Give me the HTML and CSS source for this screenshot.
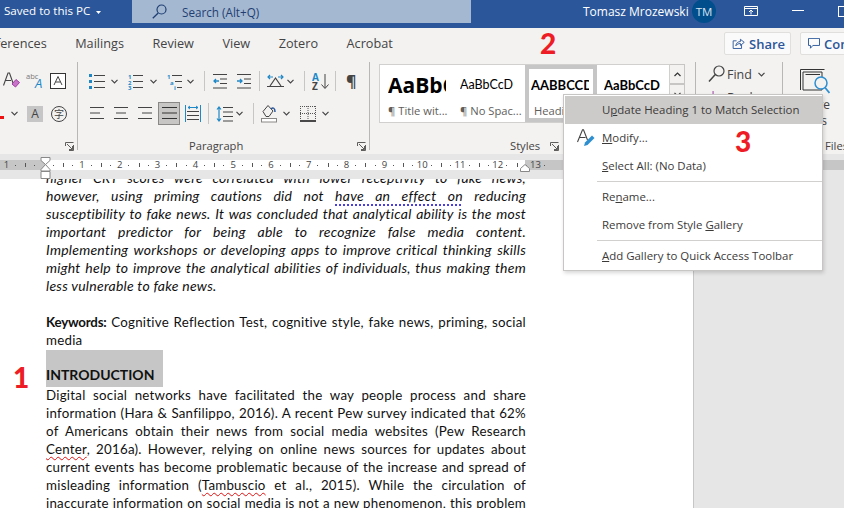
FILE: index.html
```html
<!DOCTYPE html>
<html lang="en">
<head>
    <meta charset="UTF-8">
    <meta name="viewport" content="width=device-width, initial-scale=1.0">
    <title>Update Heading 1 to Match Selection</title>
    <link rel="stylesheet" href="styles.css">
</head>
<body>
    <svg class="defs" width="0" height="0">
        <symbol id="chev" viewBox="0 0 7 5"><path d="M.5 .8 3.5 3.8 6.5 .8" fill="none" stroke="#444" stroke-width="1.2"/></symbol>
        <symbol id="launcher" viewBox="0 0 9 9"><path d="M.5 4V.5H8.5M8.5 3V8.5H4M2 2 7.5 7.5M7.5 4V7.5H4" fill="none" stroke="#605e5c"/></symbol>
    </svg>

    <header class="titlebar">
        <span class="saved">Saved to this PC</span>
        <svg class="saved-caret" width="5" height="3"><path d="M0 0H5L2.5 3Z" fill="#fff"/></svg>
        <div class="search">
            <svg width="15" height="15" viewBox="0 0 15 15"><circle cx="9.5" cy="5.5" r="4.5" fill="none" stroke="#1f3f73" stroke-width="1.2"/><path d="M6.2 9 .8 14.2" stroke="#1f3f73" stroke-width="1.3"/></svg>
            <span>Search (Alt+Q)</span>
        </div>
        <span class="username">Tomasz Mrozewski</span>
        <span class="avatar">TM</span>
        <svg class="win-display" width="14" height="10" viewBox="0 0 14 10"><path d="M.5 .5H13.5V9.5H.5ZM.5 2.5H13.5M7 8.5V4M5 6 7 4 9 6" fill="none" stroke="#fff"/></svg>
        <span class="win-min"></span>
        <span class="win-max"></span>
    </header>

    <nav class="tabs">
        <span class="tab tab-cut">References</span>
        <span class="tab">Mailings</span>
        <span class="tab">Review</span>
        <span class="tab">View</span>
        <span class="tab">Zotero</span>
        <span class="tab">Acrobat</span>
        <button class="share-btn">
            <svg width="13" height="13" viewBox="0 0 17 16"><path d="M6 4.5H1.5V14.5H12.5V10M5 11C5.5 7 8 5.5 11 5.5V2.5L16 6.5 11 10.5V8C8.5 8 6.5 9 5 11Z" fill="none" stroke="#2b579a" stroke-width="1.2"/></svg>
            Share
        </button>
        <button class="comments-btn">
            <svg width="12" height="11" viewBox="0 0 15 14"><path d="M.5 .5H14.5V9.5H6L3 13V9.5H.5Z" fill="none" stroke="#2b579a" stroke-width="1.2"/></svg>
            Comments
        </button>
    </nav>

    <section class="ribbon">
        <div class="group group-font">
            <div class="font-top">
                <svg width="17" height="17" viewBox="0 0 17 17"><path d="M.5 13.5 5 1H6.5L10 11M2.5 8.5H8" fill="none" stroke="#444" stroke-width="1.1"/><path d="M9 12 13 7.5 16.5 10.5 12.5 15Z" fill="#c774c9" stroke="#a13ea3"/></svg>
                <svg width="18" height="17" viewBox="0 0 18 17"><text x="0" y="7" class="ico-abc">abc</text><text x="9" y="16" class="ico-a-blue">A</text></svg>
                <svg width="16" height="16" viewBox="0 0 16 16"><rect x=".5" y=".5" width="15" height="15" fill="#fff" stroke="#333"/><path d="M4 12 8 3.5 12 12M5.5 9H10.5" fill="none" stroke="#444"/></svg>
            </div>
            <div class="font-bottom">
                <span class="red-chip"></span>
                <svg class="chev" width="7" height="5"><use href="#chev"/></svg>
                <span class="shaded-a">A</span>
                <span class="circled">字</span>
            </div>
            <div class="group-foot foot-font">
                <svg class="launcher" width="9" height="9"><use href="#launcher"/></svg>
            </div>
        </div>
        <div class="group-sep"></div>

        <div class="group group-para">
            <div class="para-top">
                <svg width="16" height="17" viewBox="0 0 16 17"><path d="M0 1H3V4H0ZM0 7H3V10H0ZM0 13H3V16H0Z" fill="#1e88c7"/><path d="M5 2.5H16M5 8.5H16M5 14.5H16" stroke="#444"/></svg>
                <svg class="chev" width="7" height="5"><use href="#chev"/></svg>
                <svg width="16" height="17" viewBox="0 0 16 17"><text x="1" y="6" class="ico-num">1</text><text x="1" y="11.5" class="ico-num">2</text><text x="1" y="17" class="ico-num">3</text><path d="M6 2.5H16M6 8.5H16M6 14.5H16" stroke="#444"/></svg>
                <svg class="chev" width="7" height="5"><use href="#chev"/></svg>
                <svg width="16" height="17" viewBox="0 0 16 17"><text x="0" y="6" class="ico-num">1</text><text x="3" y="11.5" class="ico-num">a</text><text x="7" y="17" class="ico-num">i</text><path d="M5 2.5H15M8 8.5H15M10 14.5H15" stroke="#444"/></svg>
                <svg class="chev" width="7" height="5"><use href="#chev"/></svg>
                <span class="tool-sep"></span>
                <svg width="15" height="15" viewBox="0 0 15 15"><path d="M0 .5H14M7 5H14M7 9.5H14M0 14H14" stroke="#444"/><path d="M6 7H1M3 5 1 7 3 9" fill="none" stroke="#1e88c7" stroke-width="1.3"/></svg>
                <svg width="15" height="15" viewBox="0 0 15 15"><path d="M0 .5H14M7 5H14M7 9.5H14M0 14H14" stroke="#444"/><path d="M0 7H5M3 5 5 7 3 9" fill="none" stroke="#1e88c7" stroke-width="1.3"/></svg>
                <span class="tool-sep"></span>
                <svg width="17" height="15" viewBox="0 0 17 15"><path d="M1 3H6M3 1 1 3 3 5M11 3H16M14 1 16 3 14 5" fill="none" stroke="#1e88c7" stroke-width="1.2"/><path d="M3 12 8.5 4 14 12M0 12.5H17" fill="none" stroke="#444" stroke-width="1.2"/></svg>
                <svg class="chev" width="7" height="5"><use href="#chev"/></svg>
                <span class="tool-sep"></span>
                <svg width="17" height="17" viewBox="0 0 17 17"><text x="0" y="8" class="ico-sort-a">A</text><text x="0" y="17" class="ico-sort-z">Z</text><path d="M13 1V15M9.5 11.5 13 15.5 16.5 11.5" fill="none" stroke="#444"/></svg>
                <span class="tool-sep"></span>
                <span class="pilcrow">¶</span>
            </div>
            <div class="para-bottom">
                <svg width="15" height="13" viewBox="0 0 15 13"><path d="M0 .5H14M0 6H10M0 11.5H14" stroke="#444"/></svg>
                <svg width="15" height="13" viewBox="0 0 15 13"><path d="M0 .5H14M2 6H12M0 11.5H14" stroke="#444"/></svg>
                <svg width="15" height="13" viewBox="0 0 15 13"><path d="M0 .5H14M4 6H14M0 11.5H14" stroke="#444"/></svg>
                <span class="align-active"><svg width="15" height="13" viewBox="0 0 15 13"><path d="M0 .5H15M0 6H15M0 11.5H15" stroke="#333"/></svg></span>
                <svg width="16" height="17" viewBox="0 0 16 17"><path d="M.5 0V17M15.5 0V17M3 2.5H13M5 1 3 2.5 5 4M11 1 13 2.5 11 4" fill="none" stroke="#1e88c7"/><path d="M2 6.5H14M2 10.5H14M2 14.5H14" stroke="#444"/></svg>
                <span class="tool-sep"></span>
                <svg width="17" height="16" viewBox="0 0 17 16"><path d="M3 1V15M1 3.5 3 1 5 3.5M1 12.5 3 15 5 12.5" fill="none" stroke="#1e88c7" stroke-width="1.2"/><path d="M7 1.5H17M7 6H17M7 10.5H17M7 15H17" stroke="#444"/></svg>
                <svg class="chev" width="7" height="5"><use href="#chev"/></svg>
                <span class="tool-sep"></span>
                <svg width="16" height="19" viewBox="0 0 16 19"><path d="M2 7.5 7 1.5 12 7 8 12.5H5Z" fill="none" stroke="#444"/><path d="M10 5C12 3 14 4 14 8" fill="none" stroke="#2b579a" stroke-width="1.5"/><rect x=".5" y="14.5" width="15" height="3.5" fill="#fff" stroke="#8a8886"/></svg>
                <svg class="chev" width="7" height="5"><use href="#chev"/></svg>
                <svg width="16" height="16" viewBox="0 0 16 16"><path d="M.5 0V14M15.5 0V14M0 .5H16M8 0V14M0 7.5H16" fill="none" stroke="#555" stroke-dasharray="1 1"/><path d="M0 15H16" stroke="#111" stroke-width="1.5"/></svg>
                <svg class="chev" width="7" height="5"><use href="#chev"/></svg>
            </div>
            <div class="group-foot">
                <span class="foot-label label-para">Paragraph</span>
                <svg class="launcher launcher-para" width="9" height="9"><use href="#launcher"/></svg>
            </div>
        </div>
        <div class="group-sep"></div>

        <div class="group group-styles">
            <div class="gallery-wrap">
                <div class="gallery">
                    <div class="style-item">
                        <div class="preview preview-title">AaBbCcD</div>
                        <div class="style-name">¶ Title wit...</div>
                    </div>
                    <div class="style-item">
                        <div class="preview preview-plain">AaBbCcD</div>
                        <div class="style-name">¶ No Spac...</div>
                    </div>
                    <div class="style-item style-selected">
                        <div class="preview preview-head">AABBCCD</div>
                        <div class="style-name">Heading 1</div>
                    </div>
                    <div class="style-item">
                        <div class="preview preview-head2">AaBbCcD</div>
                        <div class="style-name">Heading 2</div>
                    </div>
                </div>
                <div class="gallery-scroll">
                    <span class="scroll-btn"><svg width="7" height="5" viewBox="0 0 7 5"><path d="M.5 4 3.5 1 6.5 4" fill="none" stroke="#333" stroke-width="1.2"/></svg></span>
                    <span class="scroll-btn"><svg width="7" height="5"><use href="#chev"/></svg></span>
                </div>
            </div>
            <div class="group-foot">
                <span class="foot-label label-styles">Styles</span>
                <svg class="launcher launcher-styles" width="9" height="9"><use href="#launcher"/></svg>
            </div>
        </div>
        <div class="group-sep"></div>

        <div class="group group-edit">
            <div class="edit-row">
                <svg width="17" height="18" viewBox="0 0 17 18"><circle cx="11" cy="6" r="5" fill="none" stroke="#444" stroke-width="1.2"/><path d="M7.3 9.5 1 16.5" stroke="#444" stroke-width="1.5"/></svg>
                <span class="edit-text">Find</span>
                <svg class="chev" width="7" height="5"><use href="#chev"/></svg>
            </div>
            <div class="edit-row edit-row-2">
                <span class="replace-ico"><span class="ri-arrow">‹</span><span class="ri-b">b</span></span>
                <span class="edit-text">Replace</span>
            </div>
        </div>
        <div class="group-sep"></div>

        <div class="group group-files">
            <svg class="files-ico" width="30" height="28" viewBox="0 0 30 28"><path d="M.5 .5H24.5M.5 .5V21M3 3H22V21H3ZM5.5 5.5H20" fill="none" stroke="#333"/><circle cx="21" cy="14" r="6" fill="#f3f2f1" stroke="#2e8fd0" stroke-width="1.5"/><path d="M25 18.5 29.5 24" stroke="#2e8fd0" stroke-width="1.8"/></svg>
            <span class="files-line">Compare</span>
            <span class="files-line files-line-2">Files</span>
            <div class="group-foot foot-files"><span class="foot-label">Compare Files</span></div>
        </div>
    </section>

    <div class="ruler-band">
        <div class="ruler">
            <span class="tick-cell">1</span>
            <span class="tick-cell"></span>
            <span class="tick-cell">1</span>
            <span class="tick-cell">2</span>
            <span class="tick-cell">3</span>
            <span class="tick-cell">4</span>
            <span class="tick-cell">5</span>
            <span class="tick-cell">6</span>
            <span class="tick-cell">7</span>
            <span class="tick-cell">8</span>
            <span class="tick-cell">9</span>
            <span class="tick-cell">10</span>
            <span class="tick-cell">11</span>
            <span class="tick-cell">12</span>
            <span class="tick-cell">13</span>
        </div>
        <svg class="indent-left" width="11" height="22" viewBox="0 0 11 22"><path d="M1 .5H10V3.5L5.5 7.5 10 12.5V14H1V12.5L5.5 7.5 1 3.5Z" fill="#fff" stroke="#888"/><path d="M1 14.5H10V21.5H1Z" fill="#fff" stroke="#888"/></svg>
        <svg class="indent-right" width="10" height="8" viewBox="0 0 10 8"><path d="M.5 7.5V4.5L5 .5 9.5 4.5V7.5Z" fill="#fff" stroke="#888"/></svg>
    </div>

    <main class="workspace">
        <article class="page">
            <p class="just abstract">higher CRT scores were correlated with lower receptivity to fake news,<br>
                however, using priming cautions did not <span class="grammar">have an effect on</span> reducing<br>
                susceptibility to fake news. It was concluded that analytical ability is the most<br>
                important predictor for being able to recognize false media content.<br>
                Implementing workshops or developing apps to improve critical thinking skills<br>
                might help to improve the analytical abilities of individuals, thus making them</p>
            <p class="abstract para-end">less vulnerable to fake news.</p>
            <p class="just"><strong>Keywords:</strong> Cognitive Reflection Test, cognitive style, fake news, priming, social</p>
            <p class="para-end">media</p>
            <h1 class="selected-heading">INTRODUCTION</h1>
            <p class="just">Digital social networks have facilitated the way people process and share<br>
                information (Hara &amp; Sanfilippo, 2016). A recent Pew survey indicated that 62%<br>
                of Americans obtain their news from social media websites (Pew Research<br>
                <span class="spell">Center</span>, 2016a). However, relying on online news sources for updates about<br>
                current events has become problematic because of the increase and spread of<br>
                misleading information (<span class="spell">Tambuscio</span> et al., 2015). While the circulation of<br>
                inaccurate information on social media is not a new phenomenon, this problem</p>
        </article>
    </main>

    <div class="context-menu">
        <div class="menu-item menu-hover">U<u>p</u>date Heading 1 to Match Selection</div>
        <div class="menu-item">
            <svg class="menu-ico" width="18" height="18" viewBox="0 0 18 18"><path d="M.5 13 5.5 .8H6.5L10.5 11M2.5 8.5H8.5" fill="none" stroke="#444" stroke-width="1.1"/><path d="M7 17 8 13.5 15 6.5 17.5 9 10.5 16Z" fill="#2e8fd0"/></svg>
            <u>M</u>odify...
        </div>
        <div class="menu-item"><u>S</u>elect All: (No Data)</div>
        <div class="menu-sep"></div>
        <div class="menu-item">Re<u>n</u>ame...</div>
        <div class="menu-item">Remove from Style <u>G</u>allery</div>
        <div class="menu-sep"></div>
        <div class="menu-item"><u>A</u>dd Gallery to Quick Access Toolbar</div>
    </div>

    <span class="step step-1">1</span>
    <span class="step step-2">2</span>
    <span class="step step-3">3</span>
</body>
</html>
```

FILE: styles.css
```css
html, body {
    margin: 0;
    height: 100%;
}

body {
    position: relative;
    display: flex;
    flex-direction: column;
    width: 844px;
    height: 508px;
    overflow: hidden;
    background-color: #e6e6e6;
    font-family: "Open Sans", "Noto Sans", sans-serif;
    color: #444;
}

svg {
    display: block;
    flex: none;
}

.defs {
    position: absolute;
}

/* Title bar */
.titlebar {
    display: flex;
    flex: none;
    height: 28px;
    background-color: #2b579a;
    color: #fff;
    font-size: 11.6px;
    overflow: hidden;
}

.titlebar > * {
    flex: none;
}

.saved {
    margin: 3px 0 0 4px;
    width: 92px;
    white-space: nowrap;
}

.saved-caret {
    margin-top: 11px;
    margin-right: 31px;
}

.search {
    display: flex;
    align-items: center;
    width: 339px;
    height: 23px;
    padding-left: 20px;
    box-sizing: border-box;
    background-color: #a5b8d1;
    color: #1f3f73;
    font-size: 11.7px;
}

.search span {
    margin-left: 15px;
}

.username {
    margin: 3px 0 0 112px;
    width: 109px;
    font-size: 12px;
    white-space: nowrap;
}

.avatar {
    width: 24px;
    height: 24px;
    margin-top: -1px;
    border-radius: 50%;
    background-color: #004e8c;
    color: #d6e4f0;
    font-size: 11.5px;
    line-height: 25px;
    text-align: center;
}

.win-display {
    margin: 6px 0 0 28px;
}

.win-min {
    width: 12px;
    height: 1px;
    margin: 10px 0 0 34px;
    background-color: #fff;
}

.win-max {
    width: 12px;
    height: 9px;
    margin: 6px 0 0 34px;
    border: 1px solid #fff;
}

/* Tabs */
.tabs {
    display: flex;
    flex: none;
    height: 32px;
    background-color: #f3f2f1;
    font-size: 12.7px;
    color: #444;
    overflow: hidden;
}

.tab {
    margin: 6px 28.5px 0 0;
    white-space: nowrap;
}

.tab-cut {
    margin-left: -19px;
}

.share-btn, .comments-btn {
    display: flex;
    flex: none;
    align-items: center;
    height: 23px;
    margin-top: 4px;
    padding: 0 0 0 7px;
    box-sizing: border-box;
    background-color: #fbfafa;
    border: 1px solid #e1dfdd;
    border-radius: 2px;
    color: #2b579a;
    font-family: inherit;
    font-size: 13px;
    font-weight: 600;
    gap: 4px;
}

.share-btn {
    width: 67px;
    margin-left: auto;
}

.comments-btn {
    width: 90px;
    margin: 4px -46px 0 9px;
}

/* Ribbon */
.ribbon {
    display: flex;
    flex: none;
    height: 94px;
    background-color: #f3f2f1;
    overflow: hidden;
}

.group {
    display: flex;
    flex: none;
    flex-direction: column;
    height: 94px;
    box-sizing: border-box;
}

.group-sep {
    flex: none;
    width: 1px;
    height: 88px;
    margin-top: 2px;
    background-color: #b9b7b5;
}

.group-foot {
    display: flex;
    align-items: center;
    height: 16px;
    margin-top: auto;
    font-size: 11.2px;
    color: #444;
}

.foot-label {
    line-height: 16px;
    white-space: nowrap;
}

/* Font group, cut by the window edge */
.group-font {
    width: 77px;
    padding-top: 12px;
}

.font-top, .font-bottom {
    display: flex;
    align-items: center;
}

.font-top {
    height: 17px;
    gap: 6px;
    padding-left: 3px;
}

.font-bottom {
    height: 17px;
    margin-top: 16px;
}

.red-chip {
    width: 4px;
    height: 3px;
    margin: 7px 7px 0 0;
    background-color: #ee1111;
}

.font-bottom .chev {
    margin-right: 9px;
}

.shaded-a {
    width: 16px;
    height: 16px;
    margin-right: 8px;
    background-color: #c6c6c6;
    font-size: 12px;
    line-height: 16px;
    text-align: center;
}

.circled {
    width: 14px;
    height: 14px;
    border: 1px solid #444;
    border-radius: 50%;
    font-family: "Noto Sans CJK SC", sans-serif;
    font-size: 10px;
    line-height: 14px;
    text-align: center;
}

.foot-font {
    justify-content: flex-end;
    padding-right: 3px;
}

.ico-abc {
    font-size: 7.5px;
    fill: #777;
}

.ico-a-blue {
    font-size: 13px;
    font-style: italic;
    fill: #1e88c7;
}

.ico-num {
    font-size: 6px;
    font-weight: 700;
    fill: #1e88c7;
}

.ico-sort-a {
    font-size: 10px;
    font-weight: 700;
    fill: #1e88c7;
}

.ico-sort-z {
    font-size: 10px;
    font-weight: 700;
    fill: #444;
}

/* Paragraph group */
.group-para {
    width: 291px;
    padding: 11px 0 0 11px;
}

.para-top, .para-bottom {
    display: grid;
    align-items: center;
}

.para-top {
    grid-template-columns: 22px 16px 23px 17px 20px 17px 9px 24px 22px 8px 20px 17px 8px 23px 11px 10px;
    height: 19px;
}

.para-bottom {
    grid-template-columns: 24px 24px 20px 27px 23px 8px 20px 17px 8px 22px 17px 22px 7px;
    height: 23px;
    margin: 12px 0 0 1px;
}

.tool-sep {
    width: 1px;
    height: 20px;
    background-color: #c8c6c4;
}

.para-bottom .tool-sep {
    height: 21px;
}

.pilcrow {
    font-size: 16px;
    font-weight: 700;
    line-height: 18px;
}

.align-active {
    display: flex;
    align-items: center;
    justify-content: center;
    width: 22px;
    height: 23px;
    box-sizing: border-box;
    background-color: #c8c6c4;
    border: 1px solid #8a8886;
}

.label-para {
    margin-left: 100px;
}

.launcher-para {
    margin-left: auto;
    margin-right: 3px;
}

/* Styles group */
.group-styles {
    width: 325px;
    padding: 4px 0 0 9px;
}

.gallery-wrap {
    display: flex;
    height: 59px;
}

.gallery {
    display: flex;
    width: 291px;
    box-sizing: border-box;
    background-color: #fff;
    border: 1px solid #d2d0ce;
}

.style-item {
    width: 72px;
    padding: 1px 0 0 7px;
    box-sizing: border-box;
    overflow: hidden;
}

.style-item:first-child {
    width: 73px;
    padding-left: 8px;
}

.style-selected {
    outline: 4px solid #c6c6c6;
    outline-offset: -4px;
    padding-left: 6px;
}

.preview {
    width: 58px;
    height: 39px;
    overflow: hidden;
    color: #000;
    font-family: Lato, sans-serif;
    line-height: 38px;
    white-space: nowrap;
}

.preview-title {
    font-family: "Open Sans", sans-serif;
    font-size: 21px;
    font-weight: 700;
}

.preview-plain {
    font-size: 12.5px;
}

.preview-head {
    font-size: 13px;
    font-weight: 700;
}

.preview-head2 {
    font-size: 13px;
    font-weight: 700;
}

.style-name {
    font-size: 11.2px;
    line-height: 12px;
    color: #605e5c;
    white-space: nowrap;
}

.style-selected .style-name {
    padding-left: 3px;
}

.gallery-scroll {
    display: flex;
    flex-direction: column;
    width: 15px;
}

.scroll-btn {
    display: flex;
    align-items: center;
    justify-content: center;
    height: 20px;
    box-sizing: border-box;
    border: 1px solid #c8c6c4;
    border-left: 0;
}

.label-styles {
    margin-left: 131px;
}

.launcher-styles {
    margin-left: 10px;
}

/* Editing group */
.group-edit {
    width: 86px;
    padding: 5px 0 0 12px;
}

.edit-row {
    display: flex;
    align-items: center;
    height: 18px;
    font-size: 12.5px;
}

.edit-text {
    margin: 0 6px 0 2px;
}

.edit-row-2 {
    margin-top: 5px;
}

.replace-ico {
    width: 17px;
    font-size: 12px;
    line-height: 14px;
    white-space: nowrap;
}

.ri-arrow {
    color: #1e88c7;
}

.ri-b {
    color: #a13ea3;
}

/* Files group */
.group-files {
    width: 61px;
    padding: 9px 14px 0 18px;
    align-items: flex-end;
    font-size: 12px;
}

.files-line {
    line-height: 16px;
    white-space: nowrap;
}

.files-line-2 {
    margin-right: 3px;
}

.foot-files {
    margin-right: -18px;
}

/* Ruler */
.ruler-band {
    position: relative;
    flex: none;
    height: 25px;
    padding-top: 6px;
    box-sizing: border-box;
    background-color: #e6e6e6;
}

.ruler {
    display: flex;
    height: 10px;
    background: linear-gradient(to right, #c6c6c6 46px, #fff 46px, #fff 525px, #c6c6c6 525px);
    overflow: hidden;
}

.tick-cell {
    flex: none;
    width: 37.8px;
    font-size: 9.5px;
    line-height: 10px;
    text-align: center;
    color: #444;
    background-image:
        linear-gradient(#555, #555),
        linear-gradient(#555, #555),
        linear-gradient(#555, #555);
    background-repeat: no-repeat;
    background-size: 1px 4px, 1px 1px, 1px 1px;
    background-position: 0 3px, 25% 5px, 75% 5px;
}

.tick-cell:first-child {
    margin-left: -12.5px;
}

.indent-left {
    position: absolute;
    left: 40px;
    top: 3px;
}

.indent-right {
    position: absolute;
    left: 520px;
    top: 10px;
}

/* Document */
.workspace {
    flex: 1;
    overflow: hidden;
}

.page {
    width: 694px;
    height: 100%;
    padding: 0 167px 0 46px;
    box-sizing: border-box;
    background-color: #fff;
    border-right: 1px solid #c6c6c6;
    font-family: Lato, sans-serif;
    font-size: 13.3px;
    line-height: 18px;
    color: #111;
    overflow: hidden;
}

.page p {
    margin: 0;
    letter-spacing: 0.25px;
}

.page p strong {
    letter-spacing: -0.2px;
}

.page p.abstract {
    font-size: 14px;
}

.page p.abstract:first-child {
    margin-top: -10px;
}

.abstract {
    font-style: italic;
}

.just {
    text-align: justify;
    text-align-last: justify;
}

.page .para-end {
    margin-bottom: 18px;
}

.selected-heading {
    width: 117px;
    height: 37px;
    margin: -17px 0 -1px;
    padding-top: 16px;
    box-sizing: border-box;
    background-color: #c6c6c6;
    font-size: 14px;
    font-weight: 700;
    line-height: 18px;
    color: #111;
}

.grammar {
    text-decoration: underline dotted #4b3fe0 1.5px;
    text-underline-offset: 3px;
}

.spell {
    text-decoration: underline wavy #e01010 1px;
    text-underline-offset: 2px;
}

/* Context menu */
.context-menu {
    position: absolute;
    left: 563px;
    top: 94px;
    width: 260px;
    height: 177px;
    padding-top: 1px;
    box-sizing: border-box;
    background-color: #fff;
    border: 1px solid #c8c6c4;
    box-shadow: 1px 2px 4px rgba(0, 0, 0, 0.16);
    font-size: 11.45px;
    color: #3b3a39;
}

.menu-item {
    position: relative;
    height: 28px;
    margin-left: 1px;
    padding-left: 37px;
    line-height: 27px;
    white-space: nowrap;
}

.menu-hover {
    background-color: #cdcbc9;
}

.menu-ico {
    position: absolute;
    left: 12px;
    top: 5px;
}

.menu-sep {
    height: 1px;
    margin: 1px 0 1px 33px;
    background-color: #d2d0ce;
}

/* Red step numbers */
.step {
    position: absolute;
    color: #ee1c25;
    font-family: Lato, sans-serif;
    font-size: 28px;
    font-weight: 900;
    line-height: 30px;
}

.step-1 {
    left: 13px;
    top: 362px;
}

.step-2 {
    left: 540px;
    top: 28px;
}

.step-3 {
    left: 735px;
    top: 126px;
}
```
